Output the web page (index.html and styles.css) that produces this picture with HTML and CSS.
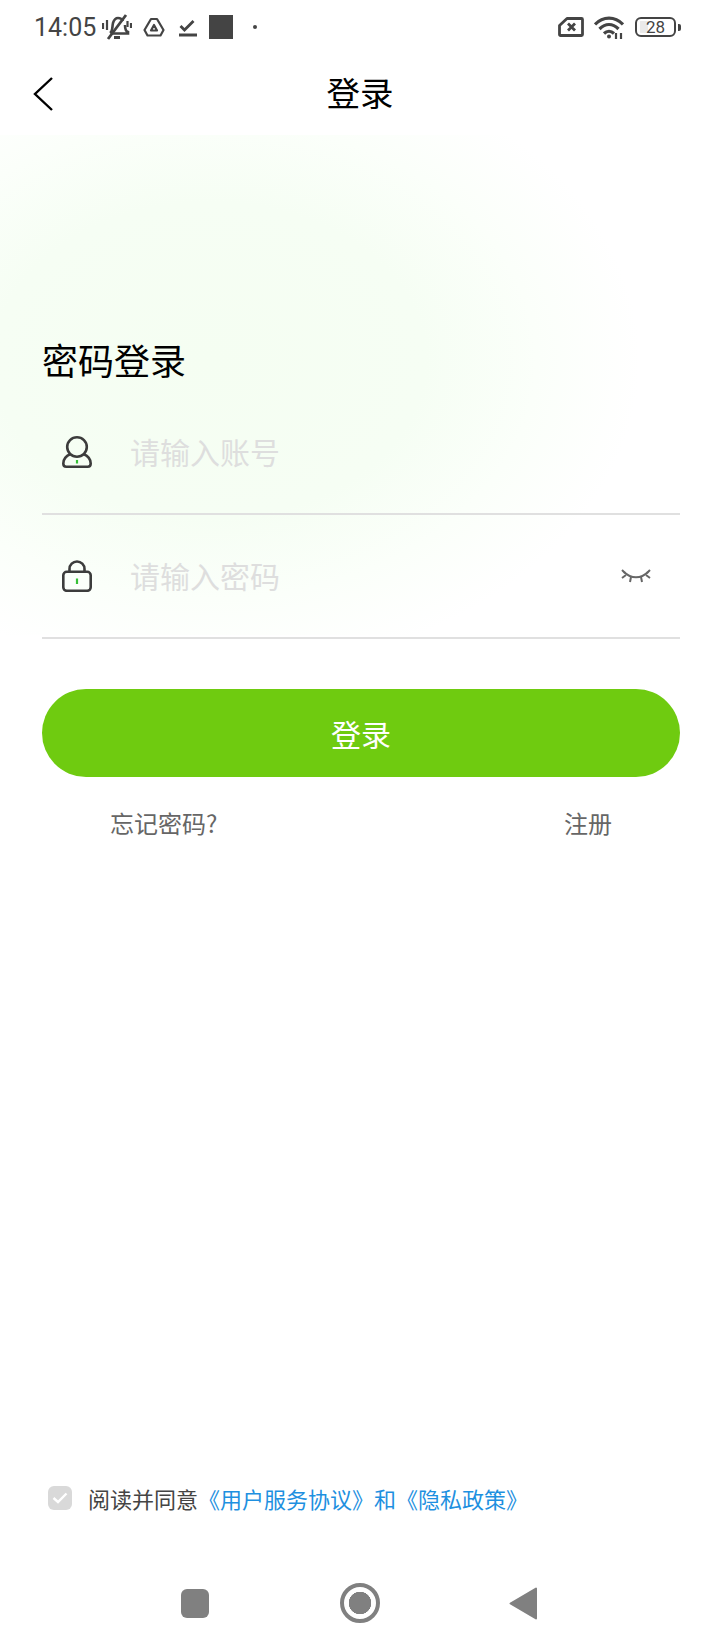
FILE: index.html
```html
<!DOCTYPE html>
<html lang="zh-CN">
<head>
    <meta charset="UTF-8">
    <meta name="viewport" content="width=device-width, initial-scale=1.0">
    <title>登录</title>
    <link rel="stylesheet" href="styles.css">
</head>
<body>
    <div class="page">
        <div class="glow"></div>

        <div class="status-bar">
            <span class="time">14:05</span>
            <svg class="st-bell" width="30" height="26" viewBox="0 0 30 26" fill="none" stroke="#444" stroke-width="2.600">
                <path d="M8 19c3-2 2-6 3-10 1-3 3-5 5-5s4 1 5 3M23 11c0 3 0 6 3 7v1.500H9"/>
                <path d="M12 23.500h6" stroke-width="3"/>
                <path d="M6 25L24 1" stroke-width="2.800"/>
                <path d="M1 9v6M5 6v10M25.500 7v6M29 9v5" stroke-width="2.200"/>
            </svg>
            <svg class="st-drive" width="22" height="20" viewBox="0 0 22 20" fill="none" stroke="#444" stroke-width="2.200" stroke-linejoin="round">
                <path d="M8 2h6l6.500 11-3 5.500h-13l-3-5.500z"/>
                <path d="M11 8l3 5.500h-6z"/>
            </svg>
            <svg class="st-check" width="18" height="20" viewBox="0 0 18 20" fill="none" stroke="#444">
                <path d="M1.500 9l4 4 9-9" stroke-width="2.800"/>
                <path d="M0 18h18" stroke-width="3"/>
            </svg>
            <span class="st-square"></span>
            <span class="st-dot"></span>

            <div class="status-right">
                <svg width="26" height="20" viewBox="0 0 26 20" fill="none" stroke="#444" stroke-width="2.800" stroke-linejoin="round">
                    <path d="M9 1.500h14.500a1 1 0 0 1 1 1v15a1 1 0 0 1-1 1h-21a1 1 0 0 1-1-1v-9z"/>
                    <path d="M10 6.500l7 7M17 6.500l-7 7"/>
                </svg>
                <svg class="st-wifi" width="30" height="23" viewBox="0 0 30 23" fill="none" stroke="#444" stroke-width="3.200">
                    <path d="M1 8.500c8-8.500 20-8.500 28 0"/>
                    <path d="M5.500 13c6-6 13-6 19 0"/>
                    <path d="M10 17.500c3-2.800 7-2.800 10 0"/>
                    <circle cx="15" cy="20.500" r="2" fill="#444" stroke="none"/>
                    <path d="M22 17v6M27 17v6" stroke-width="2.200"/>
                </svg>
                <div class="battery">
                    <span class="battery-fill"></span>
                    <span class="battery-num">28</span>
                </div>
                <span class="battery-nub"></span>
            </div>
        </div>

        <div class="header">
            <svg class="back" width="20" height="34" viewBox="0 0 20 34" fill="none" stroke="#000" stroke-width="2.400">
                <path d="M19 1L2 17l17 16"/>
            </svg>
            <h1>登录</h1>
        </div>

        <div class="main">
            <h2>密码登录</h2>

            <div class="field">
                <svg width="30" height="32" viewBox="0 0 30 32" fill="none" stroke="#3c3c3c" stroke-width="2.600">
                    <ellipse cx="15" cy="11" rx="9.800" ry="9.700"/>
                    <path d="M8.500 18C4 20 1.300 23.500 1.300 27.500c0 2 1 3.200 3 3.200h21.400c2 0 3-1.200 3-3.200 0-4-2.700-7.500-7.200-9.500"/>
                    <path d="M15 24v3.500" stroke="#36c036" stroke-width="2.200"/>
                </svg>
                <span class="placeholder">请输入账号</span>
            </div>

            <div class="field">
                <svg width="30" height="32" viewBox="0 0 30 32" fill="none" stroke="#3c3c3c" stroke-width="2.600">
                    <path d="M7.500 11.500V9a7.500 7.500 0 0 1 15 0v2.500"/>
                    <rect x="1.300" y="11.800" width="27.400" height="19" rx="3.500"/>
                    <path d="M15 18.500V24" stroke="#36c036" stroke-width="2.200"/>
                </svg>
                <span class="placeholder">请输入密码</span>
                <svg class="eye" width="30" height="14" viewBox="0 0 30 14" fill="none" stroke="#666" stroke-width="2">
                    <path d="M3 3c7 7 17 7 24 0"/>
                    <path d="M1 1l3 3M1 9l4-3M10 8l-1 5M20 8l1 5M29 1l-3 3M29 9l-4-3"/>
                </svg>
            </div>

            <button class="login-btn">登录</button>

            <div class="links">
                <span>忘记密码?</span>
                <span>注册</span>
            </div>
        </div>

        <div class="agree">
            <span class="agree-box">
                <svg width="16" height="12" viewBox="0 0 16 12" fill="none" stroke="#fff" stroke-width="2.400">
                    <path d="M1.500 6l4.500 4 8.500-8.500"/>
                </svg>
            </span>
            <span>阅读并同意<a class="agree-link">《用户服务协议》和《隐私政策》</a></span>
        </div>

        <div class="nav-bar">
            <span class="nav-square"></span>
            <span class="nav-home"></span>
            <svg width="28" height="33" viewBox="0 0 28 33" fill="#808080" stroke="#808080" stroke-width="2" stroke-linejoin="round">
                <path d="M1.500 16.500L27 1.500v30z"/>
            </svg>
        </div>
    </div>
</body>
</html>
```

FILE: styles.css
```css
* {
    box-sizing: border-box;
}
body {
    margin: 0;
    background: #fff;
    font-family: "Noto Sans CJK SC", "Liberation Sans", sans-serif;
}
.page {
    position: relative;
    width: 720px;
    height: 1650px;
    display: flex;
    flex-direction: column;
    overflow: hidden;
}
/* faint green wash behind the form */
.glow {
    position: absolute;
    left: 0;
    top: 135px;
    width: 720px;
    height: 500px;
    background: radial-gradient(ellipse 430px 315px at 210px 225px, #f5fef2 0%, #f6fef4 50%, #fbfffa 76%, #ffffff 100%);
}
.status-bar {
    position: relative;
    height: 54px;
    display: flex;
    align-items: center;
    padding-left: 34px;
    color: #444;
}
.time {
    font-family: Roboto, sans-serif;
    font-size: 25px;
    width: 68px;
}
.st-drive {
    margin-left: 11px;
}
.st-check {
    margin-left: 14px;
}
.st-square {
    width: 24px;
    height: 24px;
    margin-left: 12px;
    background: #444;
}
.st-dot {
    width: 4px;
    height: 4px;
    margin-left: 20px;
    border-radius: 50%;
    background: #444;
}
.status-right {
    margin-left: auto;
    padding-right: 39px;
    display: flex;
    align-items: center;
}
.st-wifi {
    margin-left: 10px;
}
.battery {
    position: relative;
    width: 41px;
    height: 20px;
    margin-left: 11px;
    border: 2px solid #444;
    border-radius: 6px;
    display: flex;
    align-items: center;
    justify-content: center;
    overflow: hidden;
}
.battery-fill {
    position: absolute;
    left: 3px;
    top: 2px;
    bottom: 2px;
    width: 8px;
    background: #eaeaea;
}
.battery-num {
    position: relative;
    font-family: Roboto, sans-serif;
    font-size: 17px;
    line-height: 16px;
    color: #444;
}
.battery-nub {
    width: 3px;
    height: 7px;
    margin-left: 2px;
    border-radius: 0 2px 2px 0;
    background: #444;
}
.header {
    position: relative;
    height: 76px;
    display: flex;
    align-items: center;
    justify-content: center;
}
.back {
    position: absolute;
    left: 33px;
    top: 23px;
}
.header h1 {
    margin: -2px 0 0;
    font-size: 33.500px;
    font-weight: 400;
    color: #000;
}
.main {
    position: relative;
    padding: 0 40px 0 42px;
}
.main h2 {
    margin: 204px 0 7px;
    font-size: 36px;
    line-height: 50px;
    font-weight: 400;
    color: #000;
}
.field {
    height: 124px;
    display: flex;
    align-items: center;
    padding-left: 20px;
    border-bottom: 2px solid #e0e0e0;
}
.placeholder {
    margin: -2px 0 0 38px;
    font-size: 30px;
    color: #dedede;
}
.eye {
    margin-left: auto;
    margin-right: 29px;
}
.login-btn {
    display: block;
    width: 100%;
    height: 88px;
    margin-top: 50px;
    padding: 0;
    border: none;
    border-radius: 44px;
    background: #6fcb10;
    color: #fff;
    font-family: inherit;
    font-size: 30px;
}
.links {
    display: flex;
    justify-content: space-between;
    padding: 28px 68px 0;
    font-size: 24px;
    line-height: 36px;
    color: #666;
}
.agree {
    position: relative;
    margin-top: auto;
    display: flex;
    align-items: center;
    gap: 16px;
    padding-left: 48px;
    font-size: 22px;
    line-height: 30px;
    color: #444;
}
.agree-box {
    width: 24px;
    height: 24px;
    border-radius: 6px;
    background: #d9d9d9;
    display: flex;
    align-items: center;
    justify-content: center;
}
.agree-link {
    color: #1e90e0;
}
.nav-bar {
    height: 137px;
    padding: 43px 183px 0 181px;
    display: flex;
    align-items: center;
    justify-content: space-between;
}
.nav-square {
    width: 28px;
    height: 29px;
    border-radius: 6px;
    background: #808080;
}
.nav-home {
    width: 40px;
    height: 40px;
    margin-left: 2px;
    border: 4px solid #808080;
    border-radius: 50%;
    background: radial-gradient(circle, #808080 0 11px, #fff 11.500px);
}
```
